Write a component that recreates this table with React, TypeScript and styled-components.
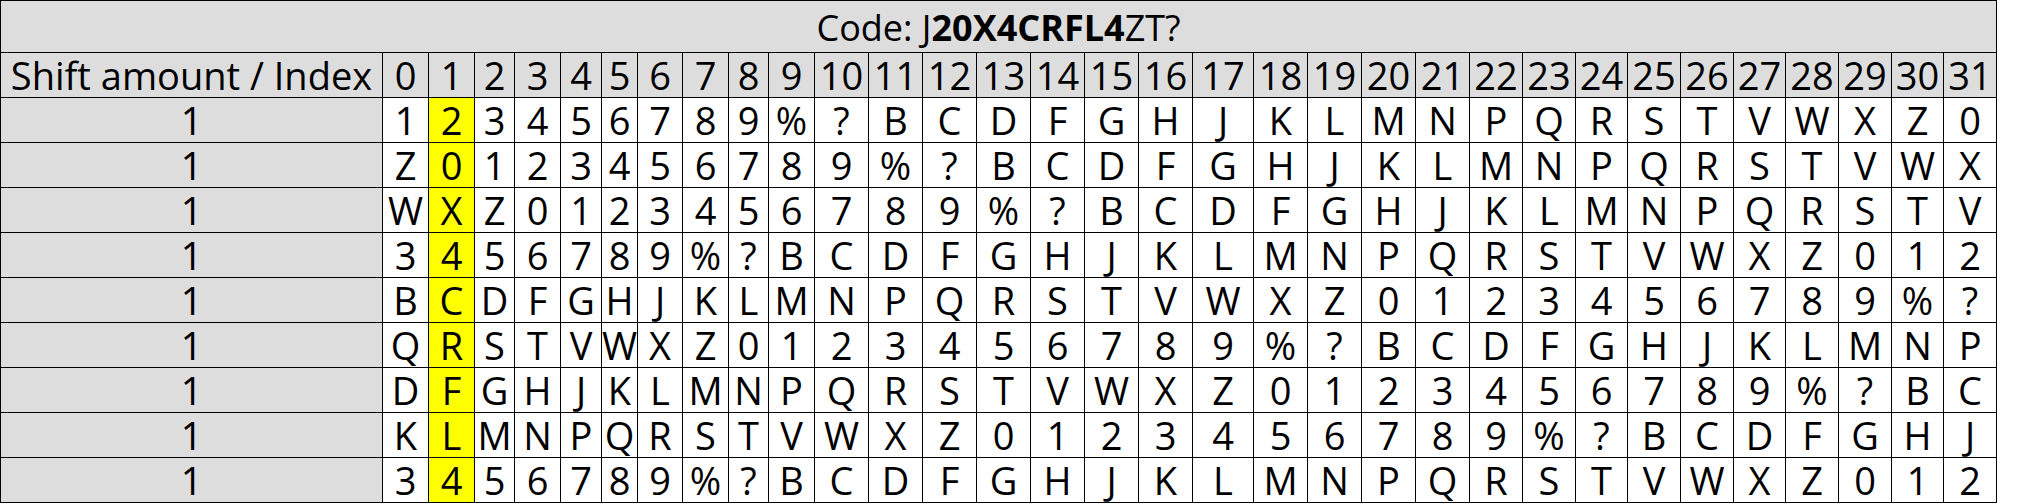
import styled, { createGlobalStyle } from "styled-components";

const GlobalStyle = createGlobalStyle`
  body {
    margin: 0;
    background: #fff;
  }
`;

const ALPHABET = "0123456789%?BCDFGHJKLMNPQRSTVWXZ".split("");
const SHIFTS = [1, 31, 29, 3, 12, 24, 14, 19, 3];
const HIGHLIGHT = 1;

// column widths taken from the original layout
const WIDTHS = [
  382, 46, 46, 40, 46, 41, 36, 45, 46, 40, 46, 54, 54, 54, 54, 54, 54, 54, 61,
  54, 54, 54, 54, 53, 53, 52, 53, 53, 52, 53, 53, 52, 53,
];

const Table = styled.table`
  border-collapse: collapse;
  table-layout: fixed;
  width: 1996px;
  font-family: "Open Sans", "Noto Sans", sans-serif;
  font-size: 38px;
  line-height: 44px;
  color: #000;
`;

const Col = styled.col<{ $w: number }>`
  width: ${(p) => p.$w}px;
`;

const TitleCell = styled.th`
  background: #dddddd;
  border: 1px solid #000;
  font-size: 36px;
  font-weight: normal;
  padding: 5px 0 2px;
  text-align: center;
`;

const HeadCell = styled.th`
  background: #dddddd;
  border: 1px solid #000;
  font-weight: normal;
  padding: 0;
  text-align: center;
  white-space: nowrap;
  overflow: visible;
`;

const LabelCell = styled.td`
  background: #dddddd;
  border: 1px solid #000;
  padding: 0;
  text-align: center;
`;

const Cell = styled.td<{ $hl?: boolean }>`
  background: ${(p) => (p.$hl ? "#ffff00" : "#fff")};
  border: 1px solid #000;
  padding: 0;
  text-align: center;
  white-space: nowrap;
  overflow: visible;
`;

const App = () => {
  return (
    <>
      <GlobalStyle />
      <Table>
        <colgroup>
          {WIDTHS.map((w, i) => (
            <Col key={i} $w={w} />
          ))}
        </colgroup>
        <thead>
          <tr>
            <TitleCell colSpan={33}>
              Code: J<b>20X4CRFL4</b>ZT?
            </TitleCell>
          </tr>
          <tr>
            <HeadCell>Shift amount / Index</HeadCell>
            {ALPHABET.map((_, i) => (
              <HeadCell key={i}>{i}</HeadCell>
            ))}
          </tr>
        </thead>
        <tbody>
          {SHIFTS.map((s, r) => (
            <tr key={r}>
              <LabelCell>1</LabelCell>
              {ALPHABET.map((_, i) => (
                <Cell key={i} $hl={i === HIGHLIGHT}>
                  {ALPHABET[(i + s) % 32]}
                </Cell>
              ))}
            </tr>
          ))}
        </tbody>
      </Table>
    </>
  );
};

export default App;
